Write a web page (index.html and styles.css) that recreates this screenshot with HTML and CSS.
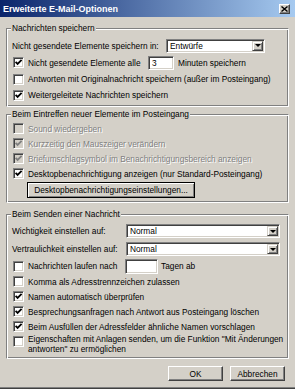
FILE: index.html
```html
<!DOCTYPE html>
<html lang="de">
<head>
<meta charset="utf-8">
<title>Erweiterte E-Mail-Optionen</title>
<link rel="stylesheet" href="styles.css">
</head>
<body>
<div class="window">
  <div class="titlebar">
    <span class="title">Erweiterte E-Mail-Optionen</span>
    <span class="close"><svg width="7" height="6" viewBox="0 0 7 6"><path d="M0.5 0.5L6.5 5.5M6.5 0.5L0.5 5.5" stroke="#000" stroke-width="1.4"/></svg></span>
  </div>
  <div class="content">
    <fieldset class="group g1">
      <legend>Nachrichten speichern</legend>
      <div class="rows">
        <div class="row h17"><span class="lbl w154">Nicht gesendete Elemente speichern in:</span><span class="select w99"><span class="val">Entwürfe</span><span class="arrow"></span></span></div>
        <div class="row h17"><span class="cb"><svg width="9" height="9" viewBox="0 0 9 9"><path d="M1.6 3.8L3.6 5.9L7.6 1.9" fill="none" stroke="#000" stroke-width="1.8"/></svg></span><span class="lbl w120">Nicht gesendete Elemente alle</span><span class="input w26">3</span><span class="txt">Minuten speichern</span></div>
        <div class="row h16"><span class="cb"></span><span class="txt">Antworten mit Originalnachricht speichern (außer im Posteingang)</span></div>
        <div class="row h16"><span class="cb"><svg width="9" height="9" viewBox="0 0 9 9"><path d="M1.6 3.8L3.6 5.9L7.6 1.9" fill="none" stroke="#000" stroke-width="1.8"/></svg></span><span class="txt">Weitergeleitete Nachrichten speichern</span></div>
      </div>
    </fieldset>

    <fieldset class="group g2">
      <legend>Beim Eintreffen neuer Elemente im Posteingang</legend>
      <div class="rows">
        <div class="row h15 disabled"><span class="cb"></span><span class="txt">Sound wiedergeben</span></div>
        <div class="row h15 disabled"><span class="cb"><svg width="9" height="9" viewBox="0 0 9 9"><path d="M1.6 3.8L3.6 5.9L7.6 1.9" fill="none" stroke="#808080" stroke-width="1.8"/></svg></span><span class="txt">Kurzzeitig den Mauszeiger verändern</span></div>
        <div class="row h15 disabled"><span class="cb"><svg width="9" height="9" viewBox="0 0 9 9"><path d="M1.6 3.8L3.6 5.9L7.6 1.9" fill="none" stroke="#808080" stroke-width="1.8"/></svg></span><span class="txt">Briefumschlagsymbol im Benachrichtigungsbereich anzeigen</span></div>
        <div class="row h15"><span class="cb"><svg width="9" height="9" viewBox="0 0 9 9"><path d="M1.6 3.8L3.6 5.9L7.6 1.9" fill="none" stroke="#000" stroke-width="1.8"/></svg></span><span class="txt">Desktopbenachrichtigung anzeigen (nur Standard-Posteingang)</span></div>
        <div class="btnrow"><span class="button wide">Desktopbenachrichtigungseinstellungen...</span></div>
      </div>
    </fieldset>

    <fieldset class="group g3">
      <legend>Beim Senden einer Nachricht</legend>
      <div class="rows">
        <div class="row h18"><span class="lbl w114">Wichtigkeit einstellen auf:</span><span class="select w154"><span class="val">Normal</span><span class="arrow"></span></span></div>
        <div class="row h18"><span class="lbl w114">Vertraulichkeit einstellen auf:</span><span class="select w154"><span class="val">Normal</span><span class="arrow"></span></span></div>
        <div class="row h16"><span class="cb"></span><span class="lbl w97">Nachrichten laufen nach</span><span class="input w33 tall"></span><span class="txt">Tagen ab</span></div>
        <div class="row h15"><span class="cb"></span><span class="txt">Komma als Adresstrennzeichen zulassen</span></div>
        <div class="row h15"><span class="cb"><svg width="9" height="9" viewBox="0 0 9 9"><path d="M1.6 3.8L3.6 5.9L7.6 1.9" fill="none" stroke="#000" stroke-width="1.8"/></svg></span><span class="txt">Namen automatisch überprüfen</span></div>
        <div class="row h15"><span class="cb"><svg width="9" height="9" viewBox="0 0 9 9"><path d="M1.6 3.8L3.6 5.9L7.6 1.9" fill="none" stroke="#000" stroke-width="1.8"/></svg></span><span class="txt">Besprechungsanfragen nach Antwort aus Posteingang löschen</span></div>
        <div class="row h15"><span class="cb"><svg width="9" height="9" viewBox="0 0 9 9"><path d="M1.6 3.8L3.6 5.9L7.6 1.9" fill="none" stroke="#000" stroke-width="1.8"/></svg></span><span class="txt">Beim Ausfüllen der Adressfelder ähnliche Namen vorschlagen</span></div>
        <div class="row multi"><span class="cb"></span><span class="txt">Eigenschaften mit Anlagen senden, um die Funktion "Mit Änderungen<br>antworten" zu ermöglichen</span></div>
      </div>
    </fieldset>
  </div>
  <div class="buttons">
    <span class="button std">OK</span>
    <span class="button std">Abbrechen</span>
  </div>
</div>
</body>
</html>
```

FILE: styles.css
```css
* { box-sizing: border-box; }

body {
  margin: 0;
  font-family: "Liberation Sans", Arial, sans-serif;
  font-size: 8.3px;
  color: #000;
}

.window {
  width: 295px;
  height: 389px;
  background: #d4d0c8;
  display: flex;
  flex-direction: column;
  border-bottom: 1px solid #404040;
  box-shadow: inset 0 -1px 0 #808080;
}

.titlebar {
  height: 17px;
  flex: none;
  display: flex;
  align-items: center;
  justify-content: space-between;
  padding: 0 5px 0 3px;
  background: linear-gradient(to right, #0a246a, #a6caf0);
  color: #fff;
  font-weight: bold;
  font-size: 9px;
}

.close {
  width: 11px;
  height: 10px;
  background: #d4d0c8;
  border: 1px solid;
  border-color: #fff #404040 #404040 #fff;
  box-shadow: inset -1px -1px 0 #808080;
  display: flex;
  align-items: center;
  justify-content: center;
}
.close svg { display: block; }

.content {
  padding: 6px 6px 0 6px;
  display: flex;
  flex-direction: column;
}

.group {
  margin: 0;
  padding: 0 0 3px 5px;
  min-width: 0;
  border: 1px solid;
  border-color: #808080 #fff #fff #808080;
  box-shadow: inset 1px 1px 0 #fff, inset -1px -1px 0 #808080;
}

.group legend {
  padding: 0 1px;
  margin-left: -1px;
  line-height: 10px;
  background: #d4d0c8;
}

.g1 .rows { padding-top: 4px; }
.g2 { margin-top: 2px; padding-bottom: 4px; }
.g2 .rows { padding-top: 2px; }
.g3 { margin-top: 6px; padding-bottom: 4px; }
.g3 .rows { padding-top: 3px; }

.row {
  display: flex;
  align-items: center;
  white-space: nowrap;
}
.h15 { height: 15px; }
.h16 { height: 16px; }
.h17 { height: 17px; }
.h18 { height: 18px; }

.row.multi {
  align-items: flex-start;
  height: 20px;
  padding-top: 2px;
}
.row.multi .txt { line-height: 9.5px; margin-top: -1px; }

.lbl { flex: none; }
.w154 { width: 154px; }
.w120 { width: 120px; }
.w114 { width: 114px; }
.w97 { width: 97px; }

.cb {
  flex: none;
  width: 11px;
  height: 11px;
  margin: 0 4px 0 1px;
  background: #fff;
  border: 1px solid;
  border-color: #808080 #fff #fff #808080;
  box-shadow: inset 1px 1px 0 #404040, inset -1px -1px 0 #d4d0c8;
}
.cb svg { display: block; }

.disabled .cb { background: #d4d0c8; }
.disabled .txt { color: #808080; text-shadow: 1px 1px 0 #fff; }

.select, .input {
  flex: none;
  height: 14px;
  background: #fff;
  border: 1px solid;
  border-color: #808080 #fff #fff #808080;
  box-shadow: inset 1px 1px 0 #404040, inset -1px -1px 0 #d4d0c8;
  display: flex;
  align-items: center;
}
.select { padding: 0 1px 0 3px; }
.select .val { flex: 1; }
.w99 { width: 99px; }
.w154.select { width: 154px; }

.arrow {
  width: 11px;
  height: 10px;
  background: #d4d0c8;
  border: 1px solid;
  border-color: #d4d0c8 #404040 #404040 #d4d0c8;
  box-shadow: inset 1px 1px 0 #fff, inset -1px -1px 0 #808080;
  display: flex;
  align-items: center;
  justify-content: center;
}
.arrow::after {
  content: "";
  border-left: 3px solid transparent;
  border-right: 3px solid transparent;
  border-top: 3px solid #000;
}

.input { padding-left: 3px; margin-right: 4px; }
.w26 { width: 26px; }
.w33 { width: 33px; margin-right: 3px; }
.input.tall { height: 15px; }

.btnrow {
  padding: 1px 0 0 15px;
}

.button {
  display: flex;
  align-items: center;
  justify-content: center;
  background: #d4d0c8;
  border: 1px solid;
  border-color: #fff #404040 #404040 #fff;
  box-shadow: inset -1px -1px 0 #808080;
  white-space: nowrap;
}
.button.wide {
  width: 168px;
  height: 16px;
  border-color: #000;
  box-shadow: inset 1px 1px 0 #fff, inset -1px -1px 0 #808080;
}
.button.std {
  width: 55px;
  height: 15px;
}

.buttons {
  display: flex;
  justify-content: flex-end;
  gap: 7px;
  padding-right: 10px;
  margin-top: 7px;
}
```
